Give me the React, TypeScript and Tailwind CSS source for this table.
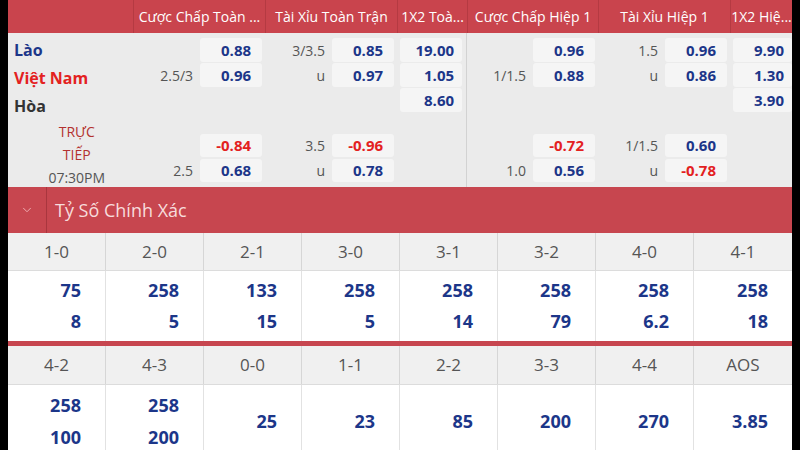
import React from 'react';
import { ChevronDown } from 'lucide-react';

type Odd = { l?: string; v?: string; red?: boolean };
type Col = { w: string; kind: 'hc' | 'x'; pr?: string };

const fullCols: Col[] = [
  { w: 'w-[132px]', kind: 'hc' },
  { w: 'w-[132px]', kind: 'hc' },
  { w: 'w-[69px]', kind: 'x', pr: 'pr-[4px]' },
];

const halfCols: Col[] = [
  { w: 'w-[131px]', kind: 'hc' },
  { w: 'w-[132px]', kind: 'hc' },
  { w: 'w-[62px]', kind: 'x', pr: 'pr-0' },
];

const fullRows: Odd[][] = [
  [{ v: '0.88' }, { l: '3/3.5', v: '0.85' }, { v: '19.00' }],
  [{ l: '2.5/3', v: '0.96' }, { l: 'u', v: '0.97' }, { v: '1.05' }],
  [{}, {}, { v: '8.60' }],
  [{ v: '-0.84', red: true }, { l: '3.5', v: '-0.96', red: true }, {}],
  [{ l: '2.5', v: '0.68' }, { l: 'u', v: '0.78' }, {}],
];

const halfRows: Odd[][] = [
  [{ v: '0.96' }, { l: '1.5', v: '0.96' }, { v: '9.90' }],
  [{ l: '1/1.5', v: '0.88' }, { l: 'u', v: '0.86' }, { v: '1.30' }],
  [{}, {}, { v: '3.90' }],
  [{ v: '-0.72', red: true }, { l: '1/1.5', v: '0.60' }, {}],
  [{ l: '1.0', v: '0.56' }, { l: 'u', v: '-0.78', red: true }, {}],
];

const rowCls = [
  'mt-[5px] h-[24px]',
  'mt-[1px] h-[24px]',
  'mt-[1px] h-[24px]',
  'mt-[22px] h-[23px]',
  'mt-[2px] h-[23px]',
];

const scores1 = [
  { s: '1-0', v: ['75', '8'] },
  { s: '2-0', v: ['258', '5'] },
  { s: '2-1', v: ['133', '15'] },
  { s: '3-0', v: ['258', '5'] },
  { s: '3-1', v: ['258', '14'] },
  { s: '3-2', v: ['258', '79'] },
  { s: '4-0', v: ['258', '6.2'] },
  { s: '4-1', v: ['258', '18'] },
];

const scores2 = [
  { s: '4-2', v: ['258', '100'] },
  { s: '4-3', v: ['258', '200'] },
  { s: '0-0', v: ['25'] },
  { s: '1-1', v: ['23'] },
  { s: '2-2', v: ['85'] },
  { s: '3-3', v: ['200'] },
  { s: '4-4', v: ['270'] },
  { s: 'AOS', v: ['3.85'] },
];

const OddBox = ({ o, cls }: { o: Odd; cls: string }) =>
  o.v ? (
    <div
      className={`${cls} bg-[#f5f5f5] rounded-[3px] flex items-center justify-end text-[15px] font-bold ${
        o.red ? 'text-[#e3211f]' : 'text-[#1c3689]'
      }`}
    >
      {o.v}
    </div>
  ) : (
    <div className={cls} />
  );

const Section = ({ cols, rows }: { cols: Col[]; rows: Odd[][] }) => (
  <div className="flex flex-col">
    {rows.map((row, ri) => (
      <div key={ri} className={`flex ${rowCls[ri]}`}>
        {row.map((o, ci) => {
          const c = cols[ci];
          if (c.kind === 'hc') {
            return (
              <div key={ci} className={`${c.w} flex h-full`}>
                <div className="flex-1 flex items-center justify-end pr-[7px] text-[14px] text-[#555]">{o.l}</div>
                <OddBox o={o} cls="w-[62px] mr-[3px] h-full pr-[11px]" />
              </div>
            );
          }
          return (
            <div key={ci} className={`${c.w} flex h-full pl-[3px] ${c.pr}`}>
              <OddBox o={o} cls="flex-1 h-full pr-[8px]" />
            </div>
          );
        })}
      </div>
    ))}
  </div>
);

const ScoreGrid = ({ items, head, body, lead }: { items: { s: string; v: string[] }[]; head: string; body: string; lead: string }) => (
  <div className="flex flex-col">
    <div className={`flex ${head} bg-[#f0f0f0] border-b border-[#dcdcdc]`}>
      {items.map((it, i) => (
        <div
          key={i}
          className={`w-[98px] flex items-center justify-center text-[17px] text-[#555] ${
            i < items.length - 1 ? 'border-r border-[#d6d6d6]' : ''
          }`}
        >
          {it.s}
        </div>
      ))}
    </div>
    <div className={`flex ${body} bg-white`}>
      {items.map((it, i) => (
        <div
          key={i}
          className={`w-[98px] flex flex-col justify-center items-end pr-[24px] text-[18px] font-bold text-[#1c3689] ${lead} ${
            i < items.length - 1 ? 'border-r border-[#e2e2e2]' : ''
          }`}
        >
          {it.v.map((v, j) => (
            <span key={j}>{v}</span>
          ))}
        </div>
      ))}
    </div>
  </div>
);

export default function App() {
  return (
    <div className="w-[800px] h-[450px] bg-black px-[8px] overflow-hidden" style={{ fontFamily: '"Open Sans", "Noto Sans", sans-serif' }}>
      <div className="w-[784px] h-[450px] bg-white overflow-hidden flex flex-col">
        {/* odds header */}
        <div className="flex h-[33px] bg-[#c9444d] text-[14px] text-white shrink-0">
          <div className="w-[125px]" />
          {[
            ['w-[132px]', 'Cược Chấp Toàn ...'],
            ['w-[132px]', 'Tài Xỉu Toàn Trận'],
            ['w-[70px]', '1X2 Toà...'],
            ['w-[131px]', 'Cược Chấp Hiệp 1'],
            ['w-[132px]', 'Tài Xỉu Hiệp 1'],
            ['w-[62px]', '1X2 Hiệ...'],
          ].map(([w, t], i) => (
            <div key={i} className={`${w} border-l border-[#b53a42] flex items-center justify-center whitespace-nowrap overflow-hidden`}>
              {t}
            </div>
          ))}
        </div>

        {/* odds body */}
        <div className="flex h-[154px] bg-[#ebebeb] shrink-0">
          <div className="w-[125px] flex flex-col pt-[3px]">
            <div className="pl-[6px] text-[16px] font-bold leading-[28px]">
              <div className="text-[#1c3689]">Lào</div>
              <div className="text-[#e3211f]">Việt Nam</div>
              <div className="text-[#333]">Hòa</div>
            </div>
            <div className="pl-[20px] text-center text-[14px] leading-[23px]">
              <div className="text-[#b3312f]">TRỰC</div>
              <div className="text-[#b3312f]">TIẾP</div>
              <div className="text-[#555]">07:30PM</div>
            </div>
          </div>
          <div className="w-[8px]" />
          <Section cols={fullCols} rows={fullRows} />
          <div className="w-[1px] bg-[#d2d2d2]" />
          <Section cols={halfCols} rows={halfRows} />
        </div>

        {/* exact score bar */}
        <div className="flex h-[46px] bg-[#c7464f] shrink-0">
          <div className="w-[39px] flex items-center justify-center border-r border-[#a9363e]">
            <ChevronDown className="w-[14px] h-[14px] text-[#f2b7ba]" strokeWidth={1.5} />
          </div>
          <div className="flex items-center pl-[8px] text-[18px] text-[#f7dcdc]">Tỷ Số Chính Xác</div>
        </div>

        <ScoreGrid items={scores1} head="h-[38px]" body="h-[70px]" lead="leading-[31px]" />
        <div className="h-[5px] bg-[#c7464f] shrink-0" />
        <ScoreGrid items={scores2} head="h-[39px]" body="h-[72px]" lead="leading-[32px]" />
      </div>
    </div>
  );
}
